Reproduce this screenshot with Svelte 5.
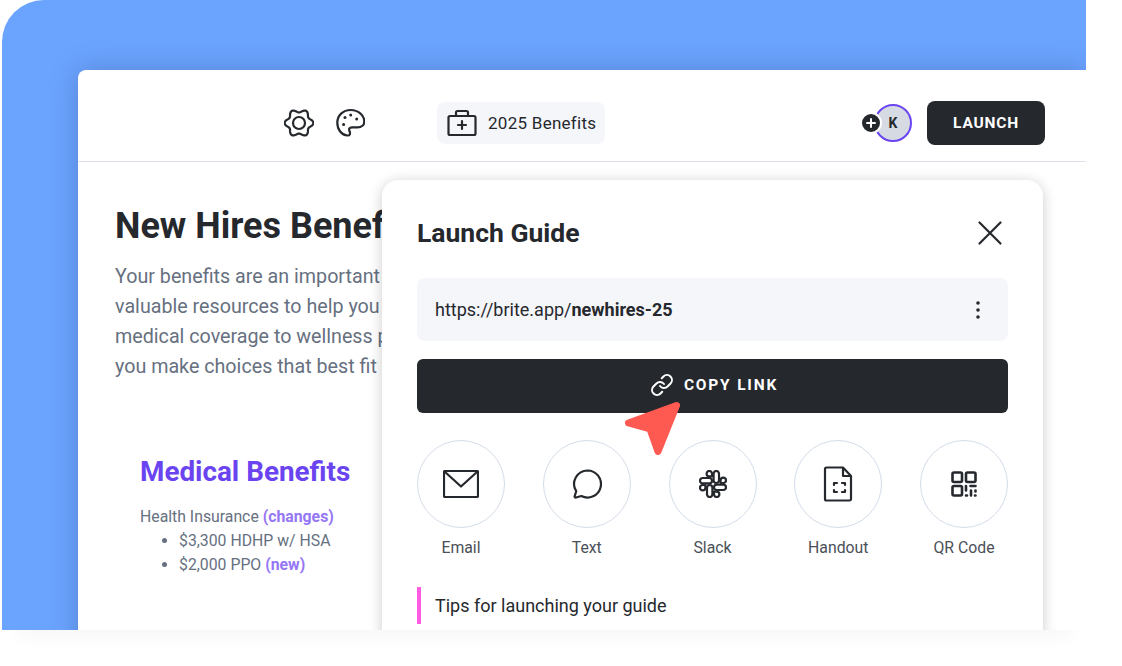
<script>
  // six lobed outline for the settings icon
  const gear = Array.from({ length: 73 }, (_, i) => {
    const t = (i / 72) * Math.PI * 2;
    const r = 12.6 + 1.8 * Math.cos(6 * t);
    return `${(15 + r * Math.cos(t)).toFixed(2)},${(15 + r * Math.sin(t) * 0.97).toFixed(2)}`;
  }).join(' ');

  const shares = [
    { id: 'email', label: 'Email' },
    { id: 'text', label: 'Text' },
    { id: 'slack', label: 'Slack' },
    { id: 'handout', label: 'Handout' },
    { id: 'qr', label: 'QR Code' }
  ];
</script>

<div class="stage">
  <div class="frame">
    <div class="window">
      <header class="bar">
        <div class="tools">
          <svg class="icon" width="30" height="30" viewBox="0 0 30 30">
            <polyline points={gear} />
            <circle cx="15" cy="15" r="6" />
          </svg>
          <svg class="icon" width="30" height="30" viewBox="0 0 30 30">
            <path d="M12.5 27.5C6.5 27 2.3 21.5 2.3 14.7 2.3 7.5 8 2 15.7 2 23 2 29.3 7 29.3 13.5c0 3.5-2.8 5.8-6.8 5.8H17c-2.5 0-3.5 1.7-2.5 3.7 1 2.5.5 4.7-2 4.5Z" />
            <circle class="dot" cx="10" cy="9.5" r="1.5" />
            <circle class="dot" cx="8.6" cy="16.5" r="1.5" />
            <circle class="dot" cx="15.7" cy="7" r="1.5" />
            <circle class="dot" cx="21.7" cy="11" r="1.5" />
          </svg>
        </div>
        <div class="chip">
          <svg class="icon" width="30" height="28" viewBox="0 0 30 28">
            <rect x="1.5" y="7" width="27" height="19" rx="1.5" />
            <path d="M9 7V3.5A1.5 1.5 0 0 1 10.5 2h9A1.5 1.5 0 0 1 21 3.5V7M15 12v8M11 16h8" />
          </svg>
          <span>2025 Benefits</span>
        </div>
        <div class="people">
          <span class="plus">
            <svg width="10" height="10" viewBox="0 0 10 10"><path d="M5 1v8M1 5h8" /></svg>
          </span>
          <span class="avatar">K</span>
        </div>
        <button class="launch">LAUNCH</button>
      </header>

      <main class="page">
        <h1>New Hires Benefits Guide</h1>
        <p class="intro">
          Your benefits are an important part of your total pay and<br />
          valuable resources to help you stay healthy. From your<br />
          medical coverage to wellness programs, this guide helps<br />
          you make choices that best fit your needs this year.
        </p>
        <section class="plan">
          <h2>Medical Benefits</h2>
          <div class="summary">Health Insurance <b>(changes)</b></div>
          <ul>
            <li>$3,300 HDHP w/ HSA</li>
            <li>$2,000 PPO <b>(new)</b></li>
          </ul>
        </section>
      </main>

      <aside class="guide">
        <div class="guide-head">
          <h3>Launch Guide</h3>
          <svg class="icon" width="26" height="26" viewBox="0 0 26 26"><path d="M2.5 2.5l21 21M23.5 2.5l-21 21" /></svg>
        </div>
        <div class="url">
          <span>https://brite.app/<b>newhires-25</b></span>
          <svg width="4" height="18" viewBox="0 0 4 18" fill="#25282d">
            <circle cx="2" cy="2" r="1.8" /><circle cx="2" cy="9" r="1.8" /><circle cx="2" cy="16" r="1.8" />
          </svg>
        </div>
        <button class="copy">
          <svg width="24" height="24" viewBox="0 0 24 24" fill="none" stroke="#fff" stroke-width="2" stroke-linecap="round" stroke-linejoin="round">
            <path d="M10 13a5 5 0 0 0 7.54.54l3-3a5 5 0 0 0-7.07-7.07l-1.72 1.71" />
            <path d="M14 11a5 5 0 0 0-7.54-.54l-3 3a5 5 0 0 0 7.07 7.07l1.71-1.71" />
          </svg>
          COPY LINK
        </button>

        <div class="shares">
          {#each shares as share}
            <div class="share">
              <div class="circle">
                {#if share.id === 'email'}
                  <svg class="icon" width="36" height="28" viewBox="0 0 36 28">
                    <rect x="1" y="1" width="34" height="26" rx="1" />
                    <path d="M1.5 1.5L18 16.5 34.5 1.5" />
                  </svg>
                {:else if share.id === 'text'}
                  <svg class="icon" width="30" height="30" viewBox="0 0 30 30">
                    <path d="M15.5 1.5a13.5 13.5 0 1 1-6.2 25.5l-5.3 1.5a1 1 0 0 1-1.3-1.3L4.2 22.2A13.5 13.5 0 0 1 15.5 1.5Z" />
                  </svg>
                {:else if share.id === 'slack'}
                  <svg class="icon" width="28" height="28" viewBox="0 0 28 28">
                    {#each [0, 90, 180, 270] as turn}
                      <g transform="rotate({turn} 14 14)">
                        <rect x="1" y="8" width="12" height="5.4" rx="2.7" />
                        <path d="M13 6.4H10.3a2.7 2.7 0 1 1 2.7-2.7Z" />
                      </g>
                    {/each}
                  </svg>
                {:else if share.id === 'handout'}
                  <svg class="icon" width="30" height="36" viewBox="0 0 30 36">
                    <path d="M20 1.5H3.5a1.5 1.5 0 0 0-1.5 1.5v30a1.5 1.5 0 0 0 1.5 1.5h23a1.5 1.5 0 0 0 1.5-1.5V10ZM20 1.5V10h8" />
                    <path d="M11 19v-2h3M19 17h3v2M22 24v2h-3M14 26h-3v-2" />
                  </svg>
                {:else}
                  <svg class="icon qr" width="26" height="26" viewBox="0 0 26 26">
                    <rect x="1.5" y="1.5" width="9.5" height="9.5" rx="1.5" />
                    <rect x="15" y="1.5" width="9.5" height="9.5" rx="1.5" />
                    <rect x="1.5" y="15" width="9.5" height="9.5" rx="1.5" />
                    <path d="M15 15v4.5M19.5 15h5M20 19.5v5M15 24.5h1M24.5 19.5v1M24 24.5h.5" />
                  </svg>
                {/if}
              </div>
              <span>{share.label}</span>
            </div>
          {/each}
        </div>

        <div class="tips">Tips for launching your guide</div>
      </aside>

      <svg class="pointer" width="60" height="60" viewBox="0 0 60 60">
        <path d="M52.5 5.5L4.5 23 26 29 34 51.5Z" />
      </svg>
    </div>
  </div>
</div>

<style>
  :global(body) {
    background: #fff;
    font-family: Roboto, "Liberation Sans", sans-serif;
  }

  .stage {
    width: 1122px;
    height: 666px;
    overflow: hidden;
  }

  .frame {
    width: 1008px;
    height: 560px;
    margin-left: 2px;
    padding: 70px 0 0 76px;
    background: #6ba4ff;
    border-top-left-radius: 42px;
    overflow: hidden;
    box-shadow: 0 18px 22px -14px rgba(0, 0, 0, 0.045);
  }

  .window {
    position: relative;
    height: 700px;
    background: #fff;
    border-top-left-radius: 8px;
    box-shadow: 0 0 28px rgba(30, 50, 90, 0.28);
  }

  .icon {
    fill: none;
    stroke: #25282d;
    stroke-width: 2.2;
    stroke-linecap: round;
    stroke-linejoin: round;
    display: block;
  }

  .icon .dot {
    fill: #25282d;
    stroke: none;
  }

  .icon.qr {
    stroke-width: 2.6;
  }

  .bar {
    display: flex;
    align-items: center;
    height: 77px;
    padding: 14px 41px 0 206px;
    border-bottom: 1px solid #dfe2ea;
  }

  .tools {
    display: flex;
    gap: 21px;
  }

  .chip {
    display: flex;
    align-items: center;
    gap: 11px;
    height: 42px;
    margin-left: 72px;
    padding: 0 9px 0 10px;
    background: #f5f6fa;
    border-radius: 8px;
    color: #25282d;
    font-size: 17px;
    letter-spacing: 0.27px;
  }

  .people {
    display: flex;
    align-items: center;
    margin-left: auto;
    margin-right: 15px;
  }

  .plus {
    display: flex;
    align-items: center;
    justify-content: center;
    position: relative;
    z-index: 1;
    width: 18px;
    height: 18px;
    margin-right: -8px;
    background: #25282d;
    border: 2px solid #fff;
    border-radius: 50%;
  }

  .plus path {
    stroke: #fff;
    stroke-width: 2;
    stroke-linecap: round;
  }

  .avatar {
    display: flex;
    align-items: center;
    justify-content: center;
    width: 34px;
    height: 34px;
    background: #d5dae3;
    border: 2px solid #6a44f0;
    border-radius: 50%;
    color: #25282d;
    font-size: 14px;
    font-weight: 700;
  }

  .launch {
    width: 118px;
    height: 44px;
    background: #25282d;
    border: 0;
    border-radius: 8px;
    color: #fff;
    font: 700 15.5px Roboto, sans-serif;
    letter-spacing: 0.8px;
  }

  .page {
    padding: 44px 0 0 37px;
    white-space: nowrap;
  }

  h1 {
    margin: 0;
    color: #25282d;
    font-size: 36px;
    font-weight: 700;
    line-height: 40px;
  }

  .intro {
    margin: 16px 0 0;
    color: #66707f;
    font-size: 19.7px;
    line-height: 30px;
  }

  .plan {
    margin: 74px 0 0 25px;
    color: #66707f;
    font-size: 15.8px;
  }

  h2 {
    margin: 0;
    color: #6a44f0;
    font-size: 27.85px;
    font-weight: 700;
    line-height: 32px;
  }

  .summary {
    margin-top: 17px;
    line-height: 24px;
  }

  .plan b {
    color: #9576f5;
    font-weight: 700;
  }

  ul {
    margin: 0;
    padding-left: 39px;
  }

  li {
    line-height: 23.5px;
  }

  .guide {
    position: absolute;
    top: 110px;
    left: 304px;
    width: 591px;
    height: 560px;
    padding: 35px;
    background: #fff;
    border-radius: 16px;
    box-shadow: 0 2px 14px rgba(0, 0, 0, 0.2);
  }

  .guide-head {
    display: flex;
    align-items: center;
    justify-content: space-between;
    height: 36px;
    padding-right: 5px;
  }

  h3 {
    margin: -2px 0 0;
    color: #25282d;
    font-size: 26.5px;
    font-weight: 700;
  }

  .url {
    display: flex;
    align-items: center;
    justify-content: space-between;
    height: 63px;
    margin-top: 27px;
    padding: 0 28px 0 18px;
    background: #f5f6fa;
    border-radius: 8px;
    color: #25282d;
    font-size: 18px;
  }

  .copy {
    display: flex;
    align-items: center;
    justify-content: center;
    gap: 10px;
    width: 100%;
    height: 54px;
    margin-top: 18px;
    padding: 0 0 2px 3px;
    background: #25282d;
    border: 0;
    border-radius: 6px;
    color: #fff;
    font: 700 15.5px Roboto, sans-serif;
    letter-spacing: 1.8px;
  }

  .shares {
    display: flex;
    justify-content: space-between;
    margin-top: 27px;
  }

  .share {
    display: flex;
    flex-direction: column;
    align-items: center;
    gap: 10px;
    width: 88px;
    color: #4b5058;
    font-size: 15.8px;
  }

  .circle {
    display: flex;
    align-items: center;
    justify-content: center;
    box-sizing: border-box;
    width: 88px;
    height: 88px;
    border: 1px solid #d3dcea;
    border-radius: 50%;
  }

  .tips {
    display: flex;
    align-items: center;
    height: 37px;
    margin-top: 30px;
    padding-left: 14px;
    border-left: 4px solid #ff5ce1;
    color: #25282d;
    font-size: 18px;
  }

  .pointer {
    position: absolute;
    top: 330px;
    left: 546px;
  }

  .pointer path {
    fill: #ff5a52;
    stroke: #ff5a52;
    stroke-width: 7;
    stroke-linejoin: round;
  }
</style>
